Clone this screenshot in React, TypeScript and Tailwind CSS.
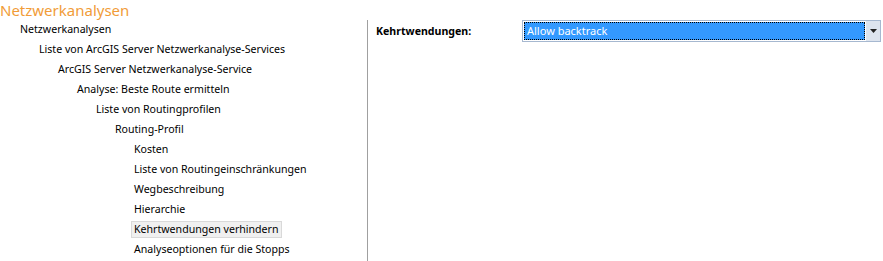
export default function App() {
  const items = [
    { name: 'Netzwerkanalysen', level: 0 },
    { name: 'Liste von ArcGIS Server Netzwerkanalyse-Services', level: 1 },
    { name: 'ArcGIS Server Netzwerkanalyse-Service', level: 2 },
    { name: 'Analyse: Beste Route ermitteln', level: 3 },
    { name: 'Liste von Routingprofilen', level: 4 },
    { name: 'Routing-Profil', level: 5 },
    { name: 'Kosten', level: 6 },
    { name: 'Liste von Routingeinschränkungen', level: 6 },
    { name: 'Wegbeschreibung', level: 6 },
    { name: 'Hierarchie', level: 6 },
    { name: 'Kehrtwendungen verhindern', level: 6, selected: true },
    { name: 'Analyseoptionen für die Stopps', level: 6 },
  ];
  const indents = ['pl-[20px]', 'pl-[39px]', 'pl-[58px]', 'pl-[77px]', 'pl-[96px]', 'pl-[115px]', 'pl-[131px]'];

  return (
    <div className="w-[883px] h-[261px] bg-white overflow-hidden font-['Segoe_UI','Noto_Sans',sans-serif] text-[10.6px] text-black">
      <div className="h-[20px] leading-[20px] text-[15px] text-[#f19c38]">Netzwerkanalysen</div>
      <div className="flex">
        {/* Tree */}
        <div className="w-[367px] shrink-0 -mt-[1px]">
          {items.map((item) => (
            <div key={item.name} className={`h-[20px] flex items-center ${indents[item.level]}`}>
              <span
                className={`leading-[15px] ${
                  item.selected ? 'bg-[#f0f0f0] border border-[#d9d9d9] px-[2px]' : item.level === 6 ? 'px-[3px]' : ''
                }`}
              >
                {item.name}
              </span>
            </div>
          ))}
        </div>

        {/* Properties */}
        <div className="flex-1 border-l border-[#a0a0a0] pl-[8px] h-[241px]">
          <div className="flex items-center h-[22px]">
            <span className="w-[146px] font-bold text-[10.6px] mt-[2px]">Kehrtwendungen:</span>
            <div className="w-[359px] h-[22px] flex border border-[#a6b8d0]">
              <div className="flex-1 bg-[#3399ff] m-[1px] outline-1 outline-dotted outline-black -outline-offset-1 text-white text-[11px] flex items-center pl-[3px]">
                Allow backtrack
              </div>
              <div className="w-[14px] bg-[#dde4ee] flex items-center justify-center">
                <svg width="7" height="4" viewBox="0 0 7 4">
                  <path d="M0 0h7L3.5 4z" fill="#222" />
                </svg>
              </div>
            </div>
          </div>
        </div>
      </div>
    </div>
  );
}
